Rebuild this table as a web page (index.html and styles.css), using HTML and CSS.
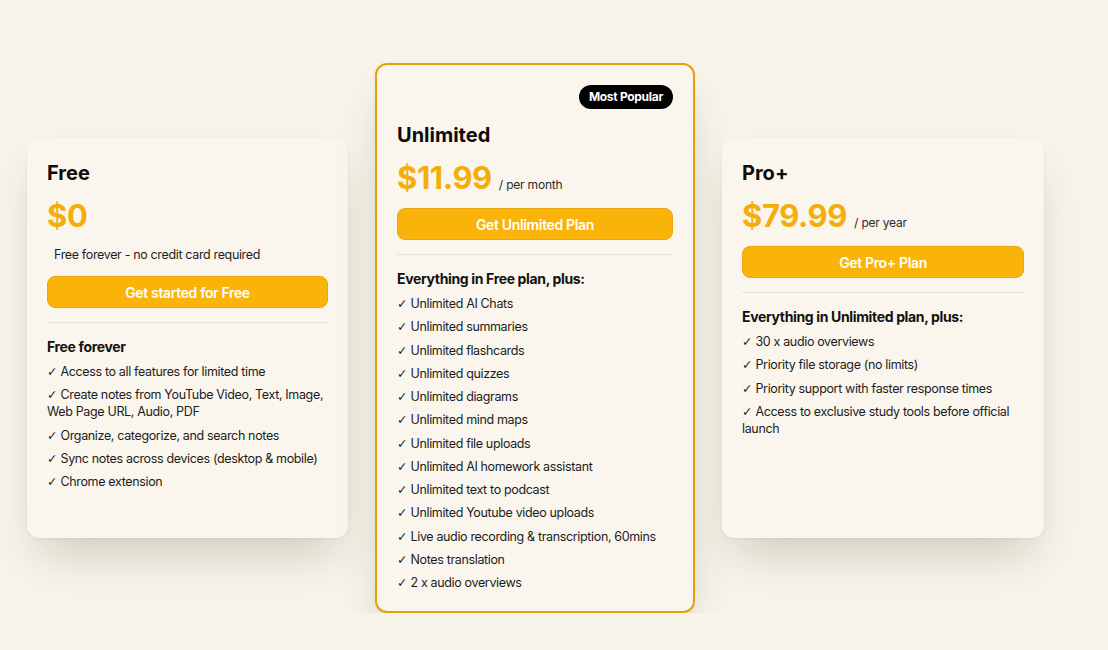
FILE: index.html
```html
<!DOCTYPE html>
<html lang="en">
<head>
<meta charset="utf-8">
<title>Pricing</title>
<link rel="stylesheet" href="styles.css">
</head>
<body>
<div class="plans">
  <div class="card side">
    <h2 class="title">Free</h2>
    <div class="price-row"><span class="price">$0</span></div>
    <p class="note">Free forever - no credit card required</p>
    <button class="cta">Get started for Free</button>
    <hr class="divider">
    <h3 class="feat-head">Free forever</h3>
    <ul class="features">
      <li>Access to all features for limited time</li>
      <li>Create notes from YouTube Video, Text, Image, Web Page URL, Audio, PDF</li>
      <li>Organize, categorize, and search notes</li>
      <li>Sync notes across devices (desktop &amp; mobile)</li>
      <li>Chrome extension</li>
    </ul>
  </div>

  <div class="card popular">
    <div class="badge-row"><span class="badge">Most Popular</span></div>
    <h2 class="title">Unlimited</h2>
    <div class="price-row"><span class="price">$11.99</span><span class="period">/ per month</span></div>
    <button class="cta">Get Unlimited Plan</button>
    <hr class="divider">
    <h3 class="feat-head">Everything in Free plan, plus:</h3>
    <ul class="features">
      <li>Unlimited AI Chats</li>
      <li>Unlimited summaries</li>
      <li>Unlimited flashcards</li>
      <li>Unlimited quizzes</li>
      <li>Unlimited diagrams</li>
      <li>Unlimited mind maps</li>
      <li>Unlimited file uploads</li>
      <li>Unlimited AI homework assistant</li>
      <li>Unlimited text to podcast</li>
      <li>Unlimited Youtube video uploads</li>
      <li>Live audio recording &amp; transcription, 60mins</li>
      <li>Notes translation</li>
      <li>2 x audio overviews</li>
    </ul>
  </div>

  <div class="card side pro">
    <h2 class="title">Pro+</h2>
    <div class="price-row"><span class="price">$79.99</span><span class="period">/ per year</span></div>
    <button class="cta">Get Pro+ Plan</button>
    <hr class="divider">
    <h3 class="feat-head">Everything in Unlimited plan, plus:</h3>
    <ul class="features">
      <li>30 x audio overviews</li>
      <li>Priority file storage (no limits)</li>
      <li>Priority support with faster response times</li>
      <li>Access to exclusive study tools before official launch</li>
    </ul>
  </div>
</div>
</body>
</html>
```

FILE: styles.css
```css
* { box-sizing: border-box; }
html, body {
  margin: 0;
  background: #f8f4ea;
  font-family: Inter, "Noto Sans", "DejaVu Sans", sans-serif;
  color: #111;
}
.plans {
  display: flex;
  align-items: center;
  gap: 27px;
  padding: 63px 0 0 27px;
}
.card {
  width: 321px;
  flex: none;
  background: #faf6ed;
  border-radius: 12px;
  padding: 21px 20px 20px;
  display: flex;
  flex-direction: column;
  box-shadow: 0 25px 45px -12px rgba(60, 45, 20, 0.22), 0 1px 3px rgba(0,0,0,0.06);
}
.side { min-height: 400px; }
.pro { width: 322px; }
.popular {
  width: 320px;
  border: 2px solid #e3a20c;
  padding: 20px 20px 20px;
}
.badge-row {
  display: flex;
  justify-content: flex-end;
  margin-bottom: 12px;
}
.badge {
  background: #000;
  color: #fff;
  font-size: 12px;
  font-weight: 700;
  letter-spacing: -0.3px;
  line-height: 24px;
  padding: 0 10px;
  border-radius: 12px;
}
.title {
  margin: 0;
  font-size: 20px;
  line-height: 28px;
  font-weight: 700;
  color: #0c0c0c;
}
.price-row {
  display: flex;
  align-items: baseline;
  margin-top: 11px;
}
.price {
  font-size: 31px;
  line-height: 36px;
  font-weight: 700;
  color: #f5ad0a;
  letter-spacing: -0.4px;
}
.period {
  font-size: 12px;
  color: #2a2a2a;
  margin-left: 7px;
  letter-spacing: -0.2px;
}
.note {
  margin: 12px 0 0;
  padding-left: 7px;
  font-size: 12.5px;
  line-height: 18px;
  color: #1f1f1f;
  letter-spacing: -0.35px;
}
.cta {
  margin-top: 12px;
  width: 100%;
  height: 32px;
  background: #fab309;
  border: 1px solid #eaa810;
  border-radius: 8px;
  color: #fff;
  font-family: inherit;
  font-size: 14px;
  font-weight: 600;
  letter-spacing: -0.35px;
  cursor: pointer;
}
.divider {
  border: 0;
  border-top: 1px solid #e8e2d6;
  margin: 14px 0 0;
}
.feat-head {
  margin: 14px 0 0;
  font-size: 14px;
  line-height: 20px;
  font-weight: 700;
  color: #111;
  letter-spacing: -0.35px;
}
.features {
  list-style: none;
  margin: 6px 0 0;
  padding: 0;
  display: flex;
  flex-direction: column;
  gap: 6.25px;
}
.features li {
  font-size: 12.5px;
  line-height: 17px;
  color: #1c1c1c;
  letter-spacing: -0.35px;
}
.features li::before {
  content: "✓";
  font-family: "DejaVu Sans", sans-serif;
  font-size: 12.5px;
  line-height: 17px;
  vertical-align: top;
  letter-spacing: 0;
  margin-right: 3px;
}
```
